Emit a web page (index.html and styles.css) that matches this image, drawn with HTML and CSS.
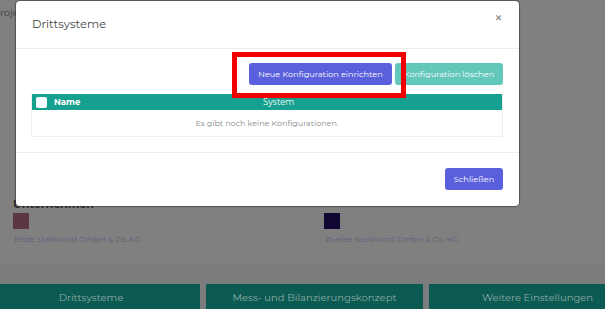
FILE: index.html
```html
<!DOCTYPE html>
<html lang="de">
<head>
<meta charset="utf-8">
<link rel="stylesheet" href="styles.css">
</head>
<body>
<div class="page">
  <div class="topbar"><span class="crumb">Projekte</span></div>
  <div class="spacer"></div>
  <div class="companies">
    <h3 class="section-title">Unternehmen</h3>
    <div class="company-grid">
      <div class="company">
        <div class="swatch swatch-red"></div>
        <span class="company-link">Erste Starkwind GmbH &amp; Co. KG</span>
      </div>
      <div class="company">
        <div class="swatch swatch-navy"></div>
        <span class="company-link">Zweite Starkwind GmbH &amp; Co. KG</span>
      </div>
    </div>
  </div>
  <div class="band"></div>
  <div class="tabs">
    <div class="tab">Drittsysteme</div>
    <div class="tab">Mess- und Bilanzierungskonzept</div>
    <div class="tab">Weitere Einstellungen</div>
  </div>
</div>

<div class="modal">
  <div class="modal-header">
    <span class="modal-title">Drittsysteme</span>
    <span class="modal-close">×</span>
  </div>
  <div class="modal-body">
    <div class="actions">
      <button class="btn btn-primary">Neue Konfiguration einrichten</button>
      <button class="btn btn-teal">Konfiguration löschen</button>
    </div>
    <div class="table">
      <div class="thead">
        <div class="th th-name"><span class="checkbox"></span>Name</div>
        <div class="th">System</div>
      </div>
      <div class="empty">Es gibt noch keine Konfigurationen.</div>
    </div>
  </div>
  <div class="modal-footer">
    <button class="btn btn-primary btn-close">Schließen</button>
  </div>
</div>

<div class="highlight"></div>
</body>
</html>
```

FILE: styles.css
```css
* { box-sizing: border-box; }
html, body { margin: 0; padding: 0; }
body {
  width: 605px;
  height: 309px;
  overflow: hidden;
  background: #808080;
  font-family: "Montserrat", "Noto Sans", "DejaVu Sans", sans-serif;
  position: relative;
}
.page {
  display: flex;
  flex-direction: column;
  height: 309px;
  overflow: hidden;
}
.page > * { flex-shrink: 0; }
.topbar {
  height: 26px;
  padding-top: 6px;
  font-size: 10px;
  color: #3c3c3c;
  white-space: nowrap;
  overflow: hidden;
}
.crumb { margin-left: -7px; }
.spacer { height: 166px; }
.companies {
  padding: 0 0 0 13px;
  height: 72px;
}
.section-title {
  margin: 0;
  padding-top: 5px;
  font-size: 11px;
  font-weight: 700;
  color: #2a2a2a;
  height: 21px;
  line-height: 14px;
  overflow: hidden;
}
.company-grid {
  display: grid;
  grid-template-columns: 311px 1fr;
}
.company {
  display: flex;
  flex-direction: column;
  gap: 5px;
}
.swatch { width: 16px; height: 16px; }
.swatch-red { background: #5b3643; }
.swatch-navy { background: #120733; }
.company-link {
  font-size: 8px;
  color: #5f5d7a;
  padding-left: 1px;
  white-space: nowrap;
}
.band {
  height: 20px;
  background: #7c7c7e;
}
.tabs {
  display: grid;
  grid-template-columns: 218px 217px 217px;
  gap: 6px;
  margin-left: -18px;
  background: #7c7c7e;
  height: 25px;
}
.tab {
  background: #0b5b53;
  color: #8fa9a5;
  font-size: 10px;
  display: flex;
  align-items: center;
  justify-content: center;
  padding-top: 2px;
  white-space: nowrap;
}

.modal {
  position: absolute;
  left: 16px;
  top: 1px;
  width: 503px;
  height: 205px;
  background: #fff;
  border-radius: 4px;
  box-shadow: 0 0 1px 1px rgba(40,40,40,0.5);
  display: flex;
  flex-direction: column;
}
.modal-header {
  height: 48px;
  flex-shrink: 0;
  border-bottom: 1px solid #ececec;
  display: flex;
  justify-content: space-between;
  align-items: flex-start;
  padding: 16px 16px 0 16px;
}
.modal-title {
  font-size: 11.5px;
  color: #474747;
}
.modal-close {
  font-size: 15px;
  color: #777;
  line-height: 1;
  margin-top: -7px;
  margin-right: 0;
}
.modal-body {
  padding: 14px 16px 0 15px;
  height: 104px;
  flex-shrink: 0;
  border-bottom: 1px solid #ececec;
}
.actions {
  display: flex;
  justify-content: flex-end;
  gap: 3px;
  height: 22px;
}
.btn {
  font-family: inherit;
  border: none;
  border-radius: 3px;
  color: #fff;
  font-size: 8.2px;
  height: 22px;
  padding: 0;
  white-space: nowrap;
}
.btn-primary { background: #5a5fdc; width: 143px; }
.btn-teal { background: #63c7ba; width: 108px; }
.table {
  margin-top: 9px;
  border: 1px solid #eeeeee;
  border-top: none;
}
.thead {
  display: grid;
  grid-template-columns: 231px 1fr;
  background: #16a08f;
  height: 16px;
  align-items: center;
  color: #fff;
  font-size: 8.5px;
}
.th-name {
  display: flex;
  align-items: center;
  gap: 7px;
  padding-left: 4px;
  font-weight: 700;
}
.checkbox {
  width: 11px;
  height: 11px;
  background: #fff;
  border-radius: 2px;
}
.empty {
  height: 26px;
  display: flex;
  align-items: center;
  justify-content: center;
  font-size: 8px;
  color: #8a8a8a;
}
.modal-footer {
  flex: 1;
  display: flex;
  justify-content: flex-end;
  padding: 15px 16px 0 0;
}
.btn-close { width: 58px; }

.highlight {
  position: absolute;
  left: 232px;
  top: 52px;
  width: 174px;
  height: 46px;
  border: 5px solid #f20000;
}
```
